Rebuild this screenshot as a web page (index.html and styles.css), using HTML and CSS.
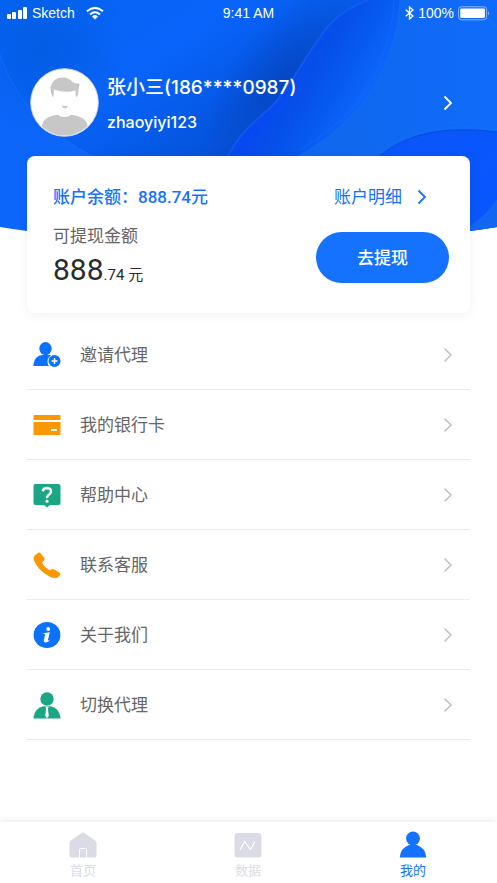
FILE: index.html
```html
<!DOCTYPE html>
<html lang="zh-CN">
<head>
<meta charset="utf-8">
<meta name="viewport" content="width=device-width, initial-scale=1">
<title>我的</title>
<link rel="stylesheet" href="styles.css">
</head>
<body>
<header class="hero">
  <svg class="hero-art" viewBox="0 0 497 240" preserveAspectRatio="none" aria-hidden="true">
    <defs>
      <clipPath id="edge"><path d="M0 0H497V227Q400 243 248 243Q97 243 0 227Z"/></clipPath>
      <linearGradient id="base" x1="0" y1="0" x2="1" y2="0">
        <stop offset="0" stop-color="#0c66fb"/><stop offset=".7" stop-color="#1068ee"/><stop offset="1" stop-color="#0f6bfa"/>
      </linearGradient>
      <linearGradient id="orb" gradientUnits="userSpaceOnUse" x1="120" y1="-20" x2="250" y2="180">
        <stop offset="0" stop-color="#0564f4"/><stop offset=".35" stop-color="#0964fb"/><stop offset=".65" stop-color="#0559e6"/><stop offset="1" stop-color="#054ccd"/>
      </linearGradient>
      <radialGradient id="shade" gradientUnits="userSpaceOnUse" cx="42" cy="50" r="85">
        <stop offset="0" stop-color="#0459dc" stop-opacity=".7"/><stop offset="1" stop-color="#0459dc" stop-opacity="0"/>
      </radialGradient>
      <radialGradient id="dark" gradientUnits="userSpaceOnUse" cx="0" cy="0" r="1" gradientTransform="translate(284 82) rotate(-52) scale(110 55)">
        <stop offset="0" stop-color="#0540b8" stop-opacity=".7"/><stop offset="1" stop-color="#0540b8" stop-opacity="0"/>
      </radialGradient>
      <linearGradient id="leaf" gradientUnits="userSpaceOnUse" x1="283" y1="70" x2="356" y2="112">
        <stop offset="0" stop-color="#0648f2"/><stop offset=".3" stop-color="#064fe9"/><stop offset=".6" stop-color="#0658ee"/><stop offset="1" stop-color="#0d65fa"/>
      </linearGradient>
      <linearGradient id="wave" x1="0" y1="0" x2="1" y2="1">
        <stop offset="0" stop-color="#0a55f8"/><stop offset="1" stop-color="#0757ff"/>
      </linearGradient>
    </defs>
    <g clip-path="url(#edge)">
      <rect width="497" height="243" fill="url(#base)"/>
      <path d="M0 54C12 92 38 128 96 158L228 158C236 140 250 125 271 107C290 88 308 50 330 24Q346 8 368 0H0Z" fill="url(#orb)"/>
      <path d="M0 54C12 92 38 128 96 158L228 158C236 140 250 125 271 107C290 88 308 50 330 24Q346 8 368 0H0Z" fill="url(#dark)"/>
      <rect width="160" height="156" fill="url(#shade)"/>
      <path d="M0 54C12 92 38 128 96 158" fill="none" stroke="#1b75ff" stroke-opacity=".5"/>
      <path d="M226 160C236 138 250 125 271 107C290 88 308 50 330 24Q346 8 368 0H400C398 50 376 91 350 118Q325 143 288 162Z" fill="url(#leaf)"/>
      <path d="M226 160C236 138 250 125 271 107C290 88 308 50 330 24Q346 8 368 0" fill="none" stroke="#1760f2" stroke-width="2" stroke-opacity=".6"/>
      <path d="M400 0C398 50 376 91 350 118Q325 143 288 162M394 0C392 46 372 87 346 114Q332 130 300 150" fill="none" stroke="#1873fb" stroke-opacity=".45"/>
      <path d="M370 164C398 138 432 124 497 132V243H370Z" fill="url(#wave)"/>
      <path d="M368 166C397 138 432 124 497 132" fill="none" stroke="#0549cf" stroke-opacity=".8"/>
      <path d="M366 163C397 134 433 121 497 130" fill="none" stroke="#1872ff" stroke-opacity=".5"/>
      <path d="M497 199Q489 213 470 226V243H497Z" fill="#1266f0"/>
      <path d="M460 0Q482 10 497 28" fill="none" stroke="#2576f6" stroke-width="2" stroke-opacity=".3"/>
    </g>
  </svg>

  <div class="status">
    <div class="status-side">
      <svg width="21" height="14" viewBox="0 0 21 14" fill="#fff" aria-hidden="true"><rect x="0" y="8" width="4" height="5" rx="1"/><rect x="5" y="6" width="4" height="7" rx="1"/><rect x="11" y="4" width="4" height="9" rx="1"/><rect x="16" y="1" width="4" height="12" rx="1"/></svg>
      <span>Sketch</span>
      <svg class="wifi" width="18" height="14" viewBox="0 0 18 14" fill="none" stroke="#fff" stroke-width="2" aria-hidden="true"><path d="M1 5.3Q9-1.600 17 5.300M4 8.400Q9 4 14 8.400"/><path d="M6 10.400Q9 7.800 12 10.400L9 13.400Z" fill="#fff" stroke="none"/></svg>
    </div>
    <span>9:41 AM</span>
    <div class="status-side status-end">
      <svg width="9" height="14" viewBox="0 0 9 14" fill="none" stroke="#fff" stroke-width="1.3" aria-hidden="true"><path d="M.7 3.800 8 10 4.500 13V1L8 4 .7 10.200"/></svg>
      <span>100%</span>
      <svg width="32" height="15" viewBox="0 0 32 15" aria-hidden="true"><rect x=".6" y=".8" width="28" height="13" rx="2.5" fill="none" stroke="#fff" stroke-opacity=".5"/><rect x="2.3" y="2.6" width="24.6" height="9.4" rx="1" fill="#fff"/><path d="M30 5Q32 7.300 30 9.600Z" fill="#fff" fill-opacity=".5"/></svg>
    </div>
  </div>

  <a class="profile" href="#profile">
    <svg width="69" height="69" viewBox="0 0 69 69" aria-hidden="true">
      <defs><clipPath id="face"><circle cx="34.5" cy="34.5" r="33"/></clipPath></defs>
      <circle cx="34.5" cy="34.5" r="33.8" fill="#fff" stroke="#cdd5e3" stroke-width="1"/>
      <g fill="#c7c7c7" clip-path="url(#face)">
        <path d="M23 29.500Q20.500 25.500 20.500 19Q23 10 31.500 9.500Q39 9 42.500 14Q45.500 16 49.500 15.500Q49.500 19 48.500 21Q49 26 46.500 29.500Q45.500 27 45.500 22.500Q35 25.500 24 21.500Q24 27 23 29.500Z"/>
        <path d="M31.500 37.500Q34.500 38.500 38 37.500Q37 40.500 34.700 40.500Q32.500 40.500 31.500 37.500Z"/>
        <path d="M12 69V58Q13 48 28.500 46.800Q29.500 49 34.500 49Q39.500 49 40.500 46.800Q56 48 57.500 58V69Z"/>
      </g>
    </svg>
    <div class="profile-text">
      <h1 class="name">张小三(186****0987)</h1>
      <p class="account">zhaoyiyi123</p>
    </div>
    <svg class="chevron" width="10" height="16" viewBox="0 0 10 16" aria-hidden="true"><path d="M1.500 1.500 8 8 1.500 14.500"/></svg>
  </a>
</header>

<main class="main">
  <section class="card">
    <div class="card-top">
      <p class="balance">账户余额：888.74元</p>
      <a class="detail" href="#detail">账户明细
        <svg class="chevron" width="10" height="16" viewBox="0 0 10 16" aria-hidden="true"><path d="M1.500 1.500 8 8 1.500 14.500"/></svg>
      </a>
    </div>
    <div class="card-bottom">
      <div>
        <p class="label">可提现金额</p>
        <p class="amount"><span class="amount-int">888</span>.74 元</p>
      </div>
      <button class="withdraw" type="button">去提现</button>
    </div>
  </section>

  <nav class="menu">
    <a class="row" href="#invite">
      <svg width="28" height="28" viewBox="0 0 28 28" aria-hidden="true"><g fill="#0a72fb"><ellipse cx="12.500" cy="7.600" rx="6.200" ry="6.600"/><path d="M.5 25V23Q1.500 14.800 9.500 14H18.500Q14.500 16.500 14.500 20.500Q14.500 23.500 16 25Z"/><circle cx="21.500" cy="20" r="6"/></g><path d="M21.500 17V23M18.500 20H24.500" stroke="#fff" stroke-width="1.500"/></svg>
      <span>邀请代理</span>
      <svg class="chevron" width="10" height="16" viewBox="0 0 10 16" aria-hidden="true"><path d="M1.500 1.500 8 8 1.500 14.500"/></svg>
    </a>
    <a class="row" href="#cards">
      <svg width="28" height="28" viewBox="0 0 28 28" fill="#fb9700" aria-hidden="true"><path d="M1.300 4H26.700Q27.500 4 27.500 4.800V9H.5V4.800Q.5 4 1.300 4ZM.5 11H27.500V23.200Q27.500 24 26.700 24H1.300Q.5 24 .5 23.200Z"/><rect x="18" y="18" width="6" height="2" fill="#fff"/></svg>
      <span>我的银行卡</span>
      <svg class="chevron" width="10" height="16" viewBox="0 0 10 16" aria-hidden="true"><path d="M1.500 1.500 8 8 1.500 14.500"/></svg>
    </a>
    <a class="row" href="#help">
      <svg width="28" height="28" viewBox="0 0 28 28" aria-hidden="true"><path d="M2.500 3H25.500Q27.500 3 27.500 5V22Q27.500 24 25.500 24H17L14 26.500 11 24H2.500Q.5 24 .5 22V5Q.5 3 2.500 3Z" fill="#1ba784"/><path d="M9.700 10.300Q10.200 7 14 7Q18.200 7.200 18 10.500Q17.900 12.500 15.800 13.800Q14 15 14 17.200" fill="none" stroke="#fff" stroke-width="2.400"/><circle cx="14" cy="20.300" r="1.500" fill="#fff"/></svg>
      <span>帮助中心</span>
      <svg class="chevron" width="10" height="16" viewBox="0 0 10 16" aria-hidden="true"><path d="M1.500 1.500 8 8 1.500 14.500"/></svg>
    </a>
    <a class="row" href="#service">
      <svg width="28" height="28" viewBox="0 0 28 28" fill="#fb9700" aria-hidden="true"><path d="M1.800 4.400 4.800 1.900Q6.300 1 7.600 2.300L11 6.600Q12.200 8.300 10.800 9.700L9.200 11.300Q10 15.300 16.500 19.300L18.600 18.300Q20 17.700 21.300 18.600L26.600 21.700Q28 22.800 26.900 24.300L24.600 26.500Q22 28.200 16.500 25.600Q4 19 .7 8.600Q.1 5.900 1.800 4.400Z"/></svg>
      <span>联系客服</span>
      <svg class="chevron" width="10" height="16" viewBox="0 0 10 16" aria-hidden="true"><path d="M1.500 1.500 8 8 1.500 14.500"/></svg>
    </a>
    <a class="row" href="#about">
      <svg width="28" height="28" viewBox="0 0 28 28" aria-hidden="true"><ellipse cx="14" cy="14" rx="13.400" ry="13" fill="#0a72fb"/><circle cx="15.200" cy="8" r="1.900" fill="#fff"/><path d="M10.500 12.200 16.800 11.200 15 18.800Q14.800 20 16.600 18.900L16.300 20.100Q14 21.700 12 21.400Q10.400 21 10.800 19.100L12.200 13.500Q12.300 12.800 10.400 13Z" fill="#fff"/></svg>
      <span>关于我们</span>
      <svg class="chevron" width="10" height="16" viewBox="0 0 10 16" aria-hidden="true"><path d="M1.500 1.500 8 8 1.500 14.500"/></svg>
    </a>
    <a class="row" href="#switch">
      <svg width="28" height="28" viewBox="0 0 28 28" aria-hidden="true"><g fill="#1ba784"><circle cx="14" cy="8" r="6.700"/><path d="M.6 27.500V26Q2 17 10.500 15.200H17.500Q26 17 27.400 26V27.500Z"/></g><path d="M12.300 15.500H15.700L14.900 17.700 15.800 25 14 27.200 12.200 25 13.100 17.700Z" fill="#fff"/></svg>
      <span>切换代理</span>
      <svg class="chevron" width="10" height="16" viewBox="0 0 10 16" aria-hidden="true"><path d="M1.500 1.500 8 8 1.500 14.500"/></svg>
    </a>
  </nav>
</main>

<nav class="tabs">
  <a class="tab" href="#home">
    <svg width="28" height="28" viewBox="0 0 28 28" aria-hidden="true"><path d="M12.500 2Q14 1 15.500 2L26 9.500Q27.500 10.800 27.500 12.500V24.500Q27.500 26.500 25.500 26.500H2.500Q.5 26.500 .5 24.500V12.500Q.5 10.800 2 9.500Z" fill="#dadbe4"/><path d="M10.500 26.500V18.500Q10.500 17.500 11.500 17.500H16.500Q17.500 17.500 17.500 18.500V26.500" fill="none" stroke="#fff"/></svg>
    <span>首页</span>
  </a>
  <a class="tab" href="#data">
    <svg width="28" height="28" viewBox="0 0 28 28" aria-hidden="true"><rect x=".6" y="2" width="26.800" height="24.500" rx="3" fill="#dadbe4"/><path d="M6 19 10.500 10.500 16.500 18.500 21 10.500" fill="none" stroke="#fff" stroke-width="1.200"/></svg>
    <span>数据</span>
  </a>
  <a class="tab tab-active" href="#me" aria-current="page">
    <svg width="28" height="28" viewBox="0 0 28 28" fill="#1472ff" aria-hidden="true"><circle cx="14" cy="7.500" r="6.900"/><path d="M.7 26.500Q1.500 17 10 14H18Q26.500 17 27.300 26.500Z"/></svg>
    <span>我的</span>
  </a>
</nav>
</body>
</html>
```
FILE: styles.css
```css
* {
  box-sizing: border-box;
}

body {
  margin: 0;
  min-height: 100vh;
  display: flex;
  flex-direction: column;
  background: #fff;
  color: #666;
  font-family: Inter, "Noto Sans CJK SC", sans-serif;
  font-size: 17px;
  line-height: 24px;
}

h1,
p {
  margin: 0;
}

a {
  color: inherit;
  text-decoration: none;
}

svg {
  flex: none;
  display: block;
}

.chevron {
  fill: none;
  stroke: currentColor;
  stroke-width: 1.8;
}

.hero {
  position: relative;
  color: #fff;
}

.hero-art {
  position: absolute;
  inset: 0 0 auto;
  z-index: -1;
  width: 100%;
  height: 240px;
}

.status {
  display: grid;
  grid-template-columns: 1fr auto 1fr;
  align-items: center;
  height: 26px;
  padding: 0 7px;
  font-family: "Liberation Sans", sans-serif;
  font-size: 14px;
}

.status-side {
  display: flex;
  align-items: center;
  gap: 4px;
}

.status-end {
  justify-content: flex-end;
}

.wifi {
  margin-left: 7px;
}

.profile {
  display: flex;
  align-items: center;
  gap: 8px;
  padding: 42px 44px 19px 30px;
}

.profile-text {
  flex: 1;
  display: grid;
  gap: 8px;
  padding-top: 2px;
}

.name {
  font-size: 19px;
  line-height: 28px;
  font-weight: 500;
}

.account {
  font-size: 16px;
  font-weight: 500;
  line-height: 24px;
}

.main {
  padding: 0 27px;
}

.card {
  padding: 29px 21px 22px 26px;
  border-radius: 8px;
  background: #fff;
  box-shadow: 0 2px 12px rgba(0, 0, 0, 0.06);
}

.card-top {
  display: flex;
  justify-content: space-between;
  padding-right: 22px;
  color: #1472ff;
}

.balance {
  font-family: Roboto, "Noto Sans CJK SC", sans-serif;
  font-weight: 500;
}

.detail {
  display: flex;
  align-items: center;
  gap: 15px;
}

.card-bottom {
  display: flex;
  justify-content: space-between;
  align-items: center;
  margin-top: 15px;
}

.amount {
  margin-top: 6px;
  color: #2b2b2b;
  font-family: Roboto, "Noto Sans CJK SC", sans-serif;
  font-size: 15px;
  line-height: 32px;
}

.amount-int {
  font-size: 30px;
}

.withdraw {
  width: 133px;
  height: 51px;
  border: 0;
  border-radius: 26px;
  background: #1472ff;
  color: #fff;
  font: inherit;
  font-weight: 500;
}

.menu {
  padding-top: 7px;
}

.row {
  display: flex;
  align-items: center;
  gap: 19px;
  height: 70px;
  padding: 0 17px 0 6px;
  border-bottom: 1px solid #ebebeb;
}

.row span {
  flex: 1;
}

.row .chevron {
  color: #bfc0c5;
  stroke-width: 1.5;
}

.tabs {
  display: flex;
  justify-content: space-between;
  margin-top: auto;
  padding: 9px 70px 3px 69px;
  background: #fff;
  box-shadow: 0 0 8px rgba(0, 0, 0, 0.1);
}

.tab {
  display: grid;
  justify-items: center;
  gap: 1px;
  color: #dadbe4;
  font-size: 13px;
  line-height: 20px;
}

.tab-active {
  color: #1472ff;
}
```
